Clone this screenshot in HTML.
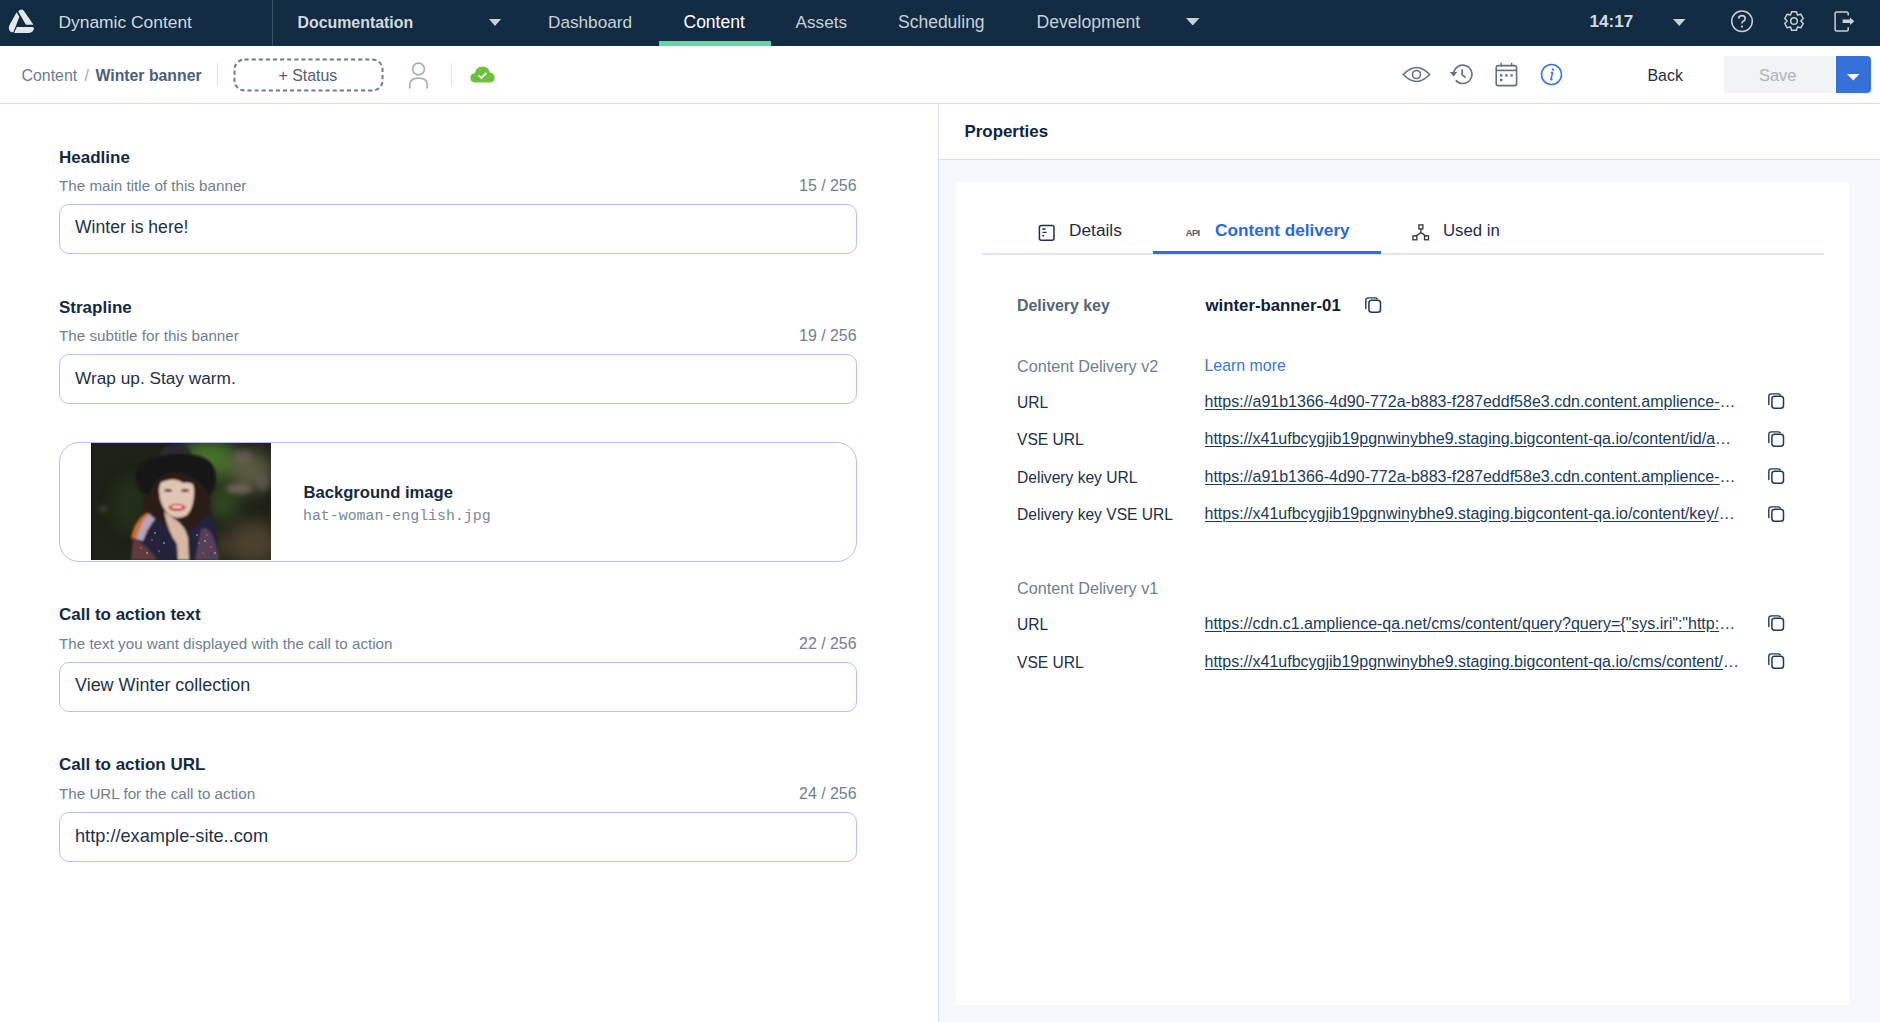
<!DOCTYPE html>
<html><head><meta charset="utf-8"><title>Dynamic Content</title>
<style>
html,body{margin:0;padding:0;width:1880px;height:1022px;overflow:hidden;background:#fff;font-family:"Liberation Sans", sans-serif}
.t{position:absolute;white-space:nowrap;line-height:1}
</style></head><body>
<div style="position:absolute;left:0px;top:0px;width:1880px;height:46px;background:#102b42"></div>
<div style="position:absolute;left:271.5px;top:0px;width:1px;height:46px;background:#3d5163"></div>
<svg style="position:absolute;left:0;top:0" width="40" height="40" viewBox="0 0 40 40">
<g fill="#e4e8ec">
<path d="M18.3 11.6 Q19.4 9.5 21.6 9.6 Q23.2 9.7 24.3 11.4 L33.5 24.7 L25.9 24.7 Z"/>
<path d="M16.6 12.3 L19.4 16.7 L13.6 31.8 Q11.4 33.2 9.6 30.8 Q8.0 28.0 9.4 25.2 Z"/>
<path d="M16.9 27.0 L32.2 27.0 Q34.6 27.2 33.7 29.6 Q32.4 33.0 28.4 33.0 L14.1 33.0 Z"/>
</g></svg>
<div class="t " style="left:58.5px;top:14.07px;font-size:17.4px;color:#d4d9de;font-weight:400;">Dynamic Content</div>
<div class="t " style="left:297.5px;top:14.84px;font-size:15.9px;color:#d4d9de;font-weight:700;">Documentation</div>
<svg style="position:absolute;left:489px;top:18.5px" width="12" height="7" viewBox="0 0 12 7"><path d="M0 0 L12 0 L6.0 7 Z" fill="#c9d0d6"/></svg>
<div class="t " style="left:548px;top:14.04px;font-size:17.2px;color:#c9d0d6;font-weight:400;">Dashboard</div>
<div class="t " style="left:683.5px;top:13.79px;font-size:17.5px;color:#ffffff;font-weight:400;">Content</div>
<div class="t " style="left:795.5px;top:14.04px;font-size:17.2px;color:#c9d0d6;font-weight:400;">Assets</div>
<div class="t " style="left:898px;top:13.79px;font-size:17.5px;color:#c9d0d6;font-weight:400;">Scheduling</div>
<div class="t " style="left:1036.5px;top:13.70px;font-size:17.6px;color:#c9d0d6;font-weight:400;">Development</div>
<div style="position:absolute;left:658.5px;top:41px;width:112px;height:5px;background:#62d9a4"></div>
<svg style="position:absolute;left:1186px;top:17.5px" width="13.5" height="7.5" viewBox="0 0 13.5 7.5"><path d="M0 0 L13.5 0 L6.75 7.5 Z" fill="#c9d0d6"/></svg>
<div class="t " style="left:1589.5px;top:13.42px;font-size:17.1px;color:#d4d9de;font-weight:700;">14:17</div>
<svg style="position:absolute;left:1673px;top:18.5px" width="12.5" height="7" viewBox="0 0 12.5 7"><path d="M0 0 L12.5 0 L6.25 7 Z" fill="#c9d0d6"/></svg>
<svg style="position:absolute;left:1730px;top:10px" width="24" height="23" viewBox="0 0 24 23"><circle cx="12" cy="11.3" r="10.3" fill="none" stroke="#c9d0d6" stroke-width="1.5"/>
<path d="M8.6 8.6 Q8.8 5.6 12 5.6 Q15.2 5.6 15.2 8.4 Q15.2 10.2 13.2 11.2 Q12 11.8 12 13.6" fill="none" stroke="#c9d0d6" stroke-width="1.6"/><circle cx="12" cy="16.6" r="1.1" fill="#c9d0d6"/></svg>
<svg style="position:absolute;left:1783.1px;top:10.4px" width="22" height="22" viewBox="0 0 22 22"><path d="M8.53 1.72 L13.47 1.72 L14.36 4.86 L14.64 5.02 L17.80 4.22 L20.27 8.50 L18.00 10.83 L18.00 11.17 L20.27 13.50 L17.80 17.78 L14.64 16.98 L14.36 17.14 L13.47 20.28 L8.53 20.28 L7.64 17.14 L7.36 16.98 L4.20 17.78 L1.73 13.50 L4.00 11.17 L4.00 10.83 L1.73 8.50 L4.20 4.22 L7.36 5.02 L7.64 4.86 Z" fill="none" stroke="#c9d0d6" stroke-width="1.5" stroke-linejoin="round"/><circle cx="11" cy="11" r="3.3" fill="none" stroke="#c9d0d6" stroke-width="1.5"/></svg>
<svg style="position:absolute;left:1834px;top:11px" width="22" height="21" viewBox="0 0 22 21"><path d="M14.2 4.6 L14.2 2.6 Q14.2 1.1 12.7 1.1 L2.6 1.1 Q1.1 1.1 1.1 2.6 L1.1 18.4 Q1.1 19.9 2.6 19.9 L12.7 19.9 Q14.2 19.9 14.2 18.4 L14.2 16.2" fill="none" stroke="#c9d0d6" stroke-width="1.5"/>
<path d="M8.6 8.6 L16 8.6 L16 6.4 L20.4 10.3 L16 14.1 L16 12.1 L8.6 12.1 Z" fill="#c9d0d6"/></svg>
<div style="position:absolute;left:0px;top:103px;width:1880px;height:1.2px;background:#d8def8"></div>
<div class="t " style="left:21.5px;top:68.14px;font-size:15.9px;color:#6a7e8c;font-weight:400;">Content</div>
<div class="t " style="left:84.5px;top:68.14px;font-size:15.9px;color:#9aa8b2;font-weight:400;">/</div>
<div class="t " style="left:95.5px;top:67.53px;font-size:15.8px;color:#4b6072;font-weight:700;">Winter banner</div>
<div style="position:absolute;left:217px;top:62.5px;width:1.2px;height:24px;background:#dfe3f8"></div>
<svg style="position:absolute;left:233px;top:57.5px" width="151" height="34" viewBox="0 0 151 34"><rect x="1.5" y="1.5" width="148" height="31" rx="10" fill="none" stroke="#6d7b86" stroke-width="2" stroke-dasharray="4.2 2.9"/></svg>
<div class="t " style="left:278.5px;top:68.14px;font-size:15.9px;color:#50606d;font-weight:400;">+ Status</div>
<svg style="position:absolute;left:407px;top:62px" width="23" height="28" viewBox="0 0 23 28"><circle cx="11.5" cy="7" r="5.9" fill="none" stroke="#a5afb5" stroke-width="1.6"/><path d="M2.8 26.6 L2.8 22.6 Q2.8 16.2 11.5 16.2 Q20.2 16.2 20.2 22.6 L20.2 26.6" fill="none" stroke="#a5afb5" stroke-width="1.7"/></svg>
<div style="position:absolute;left:451px;top:62.5px;width:1.2px;height:24px;background:#dfe3f8"></div>
<svg style="position:absolute;left:470px;top:66px" width="25" height="17" viewBox="0 0 25 17"><path d="M5.6 16.6 Q0.4 16.6 0.4 11.8 Q0.4 7.6 4.8 7.2 Q6 0.4 12.6 0.4 Q18.6 0.4 19.8 6.4 Q24.6 7.0 24.6 11.6 Q24.6 16.6 19.4 16.6 Z" fill="#6cc13c"/><path d="M8.6 9.4 L11.4 12.0 L16.4 6.8" fill="none" stroke="#fff" stroke-width="1.8"/></svg>
<svg style="position:absolute;left:1402px;top:65px" width="29" height="19" viewBox="0 0 29 19"><path d="M1.4 9.5 Q14.5 -4.5 27.6 9.5 Q14.5 23.5 1.4 9.5 Z" fill="none" stroke="#5e7280" stroke-width="1.6"/><circle cx="14.5" cy="9.5" r="4" fill="none" stroke="#5e7280" stroke-width="1.6"/></svg>
<svg style="position:absolute;left:1449px;top:64px" width="25" height="21" viewBox="0 0 25 21"><path d="M4.6 9.2 A9.2 9.2 0 1 1 6.8 16.4" fill="none" stroke="#5e7280" stroke-width="1.6"/><path d="M0.8 8.0 L8.2 8.0 L4.6 12.6 Z" fill="#5e7280"/><path d="M13.2 5.2 L13.2 10.8 L16.8 13.6" fill="none" stroke="#5e7280" stroke-width="1.7"/></svg>
<svg style="position:absolute;left:1495px;top:62px" width="24" height="25" viewBox="0 0 24 25"><rect x="1.2" y="3.6" width="20.4" height="20" rx="2.2" fill="none" stroke="#5e7280" stroke-width="1.6"/><path d="M1.2 8.4 L21.6 8.4" stroke="#5e7280" stroke-width="1.6"/><path d="M6.2 0.8 L6.2 4.6 M16.6 0.8 L16.6 4.6" stroke="#5e7280" stroke-width="1.4"/><rect x="5" y="12.2" width="2.4" height="2.4" fill="#5e7280"/><rect x="10.2" y="12.2" width="2.4" height="2.4" fill="#5e7280"/><rect x="15.4" y="12.2" width="2.4" height="2.4" fill="#5e7280"/><rect x="5" y="16.8" width="2.4" height="2.4" fill="#5e7280"/></svg>
<svg style="position:absolute;left:1540px;top:63px" width="23" height="23" viewBox="0 0 23 23"><circle cx="11.5" cy="11.5" r="10" fill="none" stroke="#3a78e0" stroke-width="1.6"/><circle cx="12.9" cy="6.6" r="1.2" fill="#3a78e0"/><path d="M10.6 9.6 L12.6 9.6 L10.9 16.2 Q10.7 17 11.6 16.8 L12.6 16.4" fill="none" stroke="#3a78e0" stroke-width="1.5" stroke-linejoin="round"/></svg>
<div class="t " style="left:1647.5px;top:67.84px;font-size:15.9px;color:#1c2f3f;font-weight:400;">Back</div>
<div style="position:absolute;left:1723.5px;top:56px;width:112px;height:36.5px;background:#f1f3f4;border-radius:3px 0 0 3px"></div>
<div class="t " style="left:1759px;top:66.72px;font-size:16.4px;color:#aab6bf;font-weight:400;">Save</div>
<div style="position:absolute;left:1835.5px;top:56px;width:35.5px;height:36.5px;background:#3471d9;border-radius:0 4px 4px 0"></div>
<svg style="position:absolute;left:1846.5px;top:74px" width="12.5" height="6.5" viewBox="0 0 12.5 6.5"><path d="M0 0 L12.5 0 L6.25 6.5 Z" fill="#ffffff"/></svg>
<div class="t " style="left:59px;top:148.51px;font-size:17.0px;color:#142a3e;font-weight:700;">Headline</div>
<div class="t " style="left:59px;top:177.63px;font-size:15.2px;color:#6f808c;font-weight:400;">The main title of this banner</div>
<div class="t" style="right:1023.5px;top:178.04px;font-size:15.9px;color:#6f808c;font-weight:400;">15 / 256</div>
<div style="position:absolute;left:59px;top:204.2px;width:797.5px;height:49.5px;border:1.6px solid #b4bff4;border-radius:10px;box-sizing:border-box;background:#fff"></div>
<div class="t " style="left:75px;top:219.30px;font-size:17.6px;color:#1d3246;font-weight:400;">Winter is here!</div>
<div class="t " style="left:59px;top:298.51px;font-size:17.0px;color:#142a3e;font-weight:700;">Strapline</div>
<div class="t " style="left:59px;top:327.63px;font-size:15.2px;color:#6f808c;font-weight:400;">The subtitle for this banner</div>
<div class="t" style="right:1023.5px;top:328.04px;font-size:15.9px;color:#6f808c;font-weight:400;">19 / 256</div>
<div style="position:absolute;left:59px;top:354.2px;width:797.5px;height:49.5px;border:1.6px solid #b4bff4;border-radius:10px;box-sizing:border-box;background:#fff"></div>
<div class="t " style="left:75px;top:369.60px;font-size:17.25px;color:#1d3246;font-weight:400;">Wrap up. Stay warm.</div>
<div class="t " style="left:59px;top:606.41px;font-size:17.0px;color:#142a3e;font-weight:700;">Call to action text</div>
<div class="t " style="left:59px;top:635.53px;font-size:15.2px;color:#6f808c;font-weight:400;">The text you want displayed with the call to action</div>
<div class="t" style="right:1023.5px;top:635.94px;font-size:15.9px;color:#6f808c;font-weight:400;">22 / 256</div>
<div style="position:absolute;left:59px;top:662.0999999999999px;width:797.5px;height:49.5px;border:1.6px solid #b4bff4;border-radius:10px;box-sizing:border-box;background:#fff"></div>
<div class="t " style="left:75px;top:676.91px;font-size:17.95px;color:#1d3246;font-weight:400;">View Winter collection</div>
<div class="t " style="left:59px;top:756.41px;font-size:17.0px;color:#142a3e;font-weight:700;">Call to action URL</div>
<div class="t " style="left:59px;top:785.53px;font-size:15.2px;color:#6f808c;font-weight:400;">The URL for the call to action</div>
<div class="t" style="right:1023.5px;top:785.94px;font-size:15.9px;color:#6f808c;font-weight:400;">24 / 256</div>
<div style="position:absolute;left:59px;top:812.0999999999999px;width:797.5px;height:49.5px;border:1.6px solid #b4bff4;border-radius:10px;box-sizing:border-box;background:#fff"></div>
<div class="t " style="left:75px;top:826.69px;font-size:18.2px;color:#1d3246;font-weight:400;">http://example-site..com</div>
<div style="position:absolute;left:59px;top:441.5px;width:797.5px;height:120px;border:1.5px solid #b4bff4;border-radius:20px;box-sizing:border-box"></div>
<svg style="position:absolute;left:91px;top:443px" width="180" height="117" viewBox="0 0 180 117">
<defs>
<filter id="bl" x="-30%" y="-30%" width="160%" height="160%"><feGaussianBlur stdDeviation="8"/></filter>
<filter id="bl2" x="-30%" y="-30%" width="160%" height="160%"><feGaussianBlur stdDeviation="2.5"/></filter>
<filter id="bl1" x="-20%" y="-20%" width="140%" height="140%"><feGaussianBlur stdDeviation="1.0"/></filter>
<clipPath id="cp"><rect width="180" height="117"/></clipPath>
</defs>
<g clip-path="url(#cp)">
<rect width="180" height="117" fill="#1e2116"/>
<g filter="url(#bl)">
<ellipse cx="40" cy="62" rx="18" ry="28" fill="#222d19"/>
<ellipse cx="118" cy="16" rx="28" ry="20" fill="#44702c"/>
<ellipse cx="132" cy="60" rx="16" ry="16" fill="#2d4a21"/>
<ellipse cx="160" cy="28" rx="22" ry="20" fill="#595a40"/>
<ellipse cx="162" cy="100" rx="26" ry="22" fill="#4c412e"/>
<ellipse cx="125" cy="105" rx="12" ry="14" fill="#3a3622"/>
</g>
<g filter="url(#bl2)">
<ellipse cx="148" cy="46" rx="13" ry="5" fill="#7a6e62" opacity="0.75"/>
<ellipse cx="152" cy="14" rx="9" ry="7" fill="#7a6068" opacity="0.55"/>
<ellipse cx="172" cy="40" rx="6" ry="8" fill="#70606a" opacity="0.5"/>
<ellipse cx="12" cy="66" rx="2.5" ry="2.5" fill="#7a7050" opacity="0.7"/>
</g>
<g filter="url(#bl1)">
<!-- hair back -->
<path d="M58 36 Q85 20 114 34 Q122 58 120 92 Q104 108 88 100 Q70 108 54 94 Q50 60 58 36 Z" fill="#2a1d19"/>
<!-- scarf -->
<path d="M40 117 L42 92 Q46 74 60 70 L70 78 L100 88 L118 70 Q126 78 128 117 Z" fill="#23213a"/>
<path d="M40 95 Q44 76 56 70 L60 72 Q50 80 46 96 Z" fill="#d2692a"/>
<path d="M45 96 Q50 78 58 71 L64 76 Q56 86 52 98 Z" fill="#b3a4b5"/>
<path d="M40 117 L42 96 Q55 100 66 117 Z" fill="#5e3a3e"/>
<path d="M104 117 L110 86 Q122 80 128 117 Z" fill="#54405a"/>
<!-- face -->
<path d="M68 48 Q68 33 85 33 Q103 33 103 48 Q103 65 96 72 Q88 77 80 73 Q69 65 68 48 Z" fill="#e2c6b4"/>
<!-- hand -->
<path d="M73 68 Q79 73 85 77 Q94 83 97 95 L98 117 L87 117 L86 101 Q77 89 73 68 Z" fill="#d8b8a4"/>
<!-- bangs / side hair -->
<path d="M62 46 Q66 24 88 25 Q108 27 108 46 Q100 38 92 40 Q84 34 74 38 Q66 40 62 46 Z" fill="#2a1d19"/>
<path d="M103 44 Q110 50 110 70 Q104 82 98 84 Q104 70 103 44 Z" fill="#2a1d19"/>
<path d="M68 44 Q62 56 66 76 Q70 82 74 82 Q68 66 68 44 Z" fill="#2a1d19"/>
<!-- lips -->
<ellipse cx="86" cy="64.5" rx="8.5" ry="3.4" fill="#c52a2e"/>
<ellipse cx="86" cy="64" rx="5.6" ry="1.3" fill="#f0e4de"/>
<!-- eyes -->
<ellipse cx="77" cy="47.5" rx="4" ry="1.5" fill="#4a3430"/>
<ellipse cx="94" cy="47.5" rx="4" ry="1.5" fill="#4a3430"/>
<!-- hat -->
<path d="M45 38 Q40 16 84 11 Q124 9 125 33 Q126 46 118 53 Q112 36 90 30 Q66 26 58 52 Q48 50 45 38 Z" fill="#181413"/>
<path d="M68 13 Q72 2 84 1.5 Q98 1.5 101 12 Q86 9 68 13 Z" fill="#2c2b30"/>
</g>
<!-- dots -->
<g fill="#c84a4a">
<circle cx="56" cy="88" r="0.9"/><circle cx="61" cy="97" r="0.9"/><circle cx="50" cy="105" r="0.9"/><circle cx="68" cy="108" r="0.9"/><circle cx="108" cy="100" r="0.9"/><circle cx="116" cy="92" r="0.9"/><circle cx="112" cy="110" r="0.9"/><circle cx="120" cy="104" r="0.9"/>
</g>
<g fill="#d8d0b0">
<circle cx="64" cy="90" r="0.8"/><circle cx="73" cy="100" r="0.8"/><circle cx="56" cy="110" r="0.8"/><circle cx="106" cy="92" r="0.8"/><circle cx="114" cy="98" r="0.8"/><circle cx="124" cy="110" r="0.8"/>
</g>
<rect x="0" y="0" width="1.2" height="117" fill="#111"/>
</g>
</svg>

<div class="t " style="left:303.5px;top:484.65px;font-size:16.6px;color:#142a3e;font-weight:700;">Background image</div>
<div class="t " style="left:303px;top:509.49px;font-size:14.9px;color:#7a8994;font-weight:400;font-family:'Liberation Mono',monospace">hat-woman-english.jpg</div>
<div style="position:absolute;left:938px;top:103.5px;width:942px;height:918.5px;background:#f7f8fd"></div>
<div style="position:absolute;left:938px;top:103.5px;width:1.2px;height:918.5px;background:#d8def8"></div>
<div style="position:absolute;left:939.2px;top:104.2px;width:940.8px;height:55px;background:#fff"></div>
<div style="position:absolute;left:939.2px;top:159px;width:940.8px;height:1.2px;background:#d8def8"></div>
<div class="t " style="left:964.5px;top:124.29px;font-size:16.9px;color:#0f2538;font-weight:700;">Properties</div>
<div style="position:absolute;left:956px;top:181.5px;width:893px;height:823px;background:#fff"></div>
<div style="position:absolute;left:982px;top:253px;width:842px;height:2px;background:#e0e4f8"></div>
<div style="position:absolute;left:1153px;top:250.5px;width:228px;height:3px;background:#2b6fdb"></div>
<svg style="position:absolute;left:1038px;top:224px" width="18" height="18" viewBox="0 0 18 18"><rect x="1.4" y="1.6" width="14.6" height="14.6" rx="2" fill="none" stroke="#1b3044" stroke-width="1.5"/><path d="M4.4 5 L7.6 5 M4.4 8.4 L8.6 8.4 M4.4 11.8 L6.2 11.8" stroke="#1b3044" stroke-width="1.4"/></svg>
<div class="t " style="left:1069px;top:222.16px;font-size:17.3px;color:#1b3044;font-weight:400;">Details</div>
<div class="t " style="left:1185.8px;top:228.34px;font-size:9.4px;color:#4f5d68;font-weight:700;letter-spacing:-0.6px">API</div>
<div class="t " style="left:1215px;top:222.24px;font-size:17.2px;color:#2a6ad6;font-weight:700;">Content delivery</div>
<svg style="position:absolute;left:1412px;top:224px" width="18" height="18" viewBox="0 0 18 18"><rect x="6.9" y="0.9" width="4" height="4" fill="none" stroke="#333" stroke-width="1.3"/><rect x="0.9" y="11.8" width="4" height="4" fill="none" stroke="#333" stroke-width="1.3"/><rect x="12.5" y="11.8" width="4" height="4" fill="none" stroke="#333" stroke-width="1.3"/><path d="M8.9 4.9 L8.9 8.6 L3.6 12.2 M8.9 8.6 L14.2 12.2" fill="none" stroke="#333" stroke-width="1.3"/></svg>
<div class="t " style="left:1443px;top:222.58px;font-size:16.8px;color:#1b3044;font-weight:400;">Used in</div>
<div class="t " style="left:1017px;top:297.74px;font-size:15.9px;color:#526674;font-weight:700;">Delivery key</div>
<div class="t " style="left:1205.5px;top:297.78px;font-size:16.8px;color:#0e2234;font-weight:700;">winter-banner-01</div>
<svg style="position:absolute;left:1363.5px;top:295.5px" width="19" height="18" viewBox="0 0 19 18"><path d="M1.8 12.6 L1.8 4.4 Q1.8 1.9 4.3 1.9 L11.4 1.9 Q12.6 1.9 13.2 2.8" fill="none" stroke="#1d3a55" stroke-width="1.4" stroke-linecap="round"/><rect x="4.9" y="4.2" width="11.6" height="12" rx="2.8" fill="none" stroke="#1d3a55" stroke-width="1.5"/></svg>
<div class="t " style="left:1017px;top:358.49px;font-size:16.2px;color:#6d7f8c;font-weight:400;">Content Delivery v2</div>
<div class="t " style="left:1204.5px;top:358.34px;font-size:15.9px;color:#3874dc;font-weight:400;">Learn more</div>
<div class="t " style="left:1017px;top:394.79px;font-size:15.6px;color:#1b3044;font-weight:400;">URL</div>
<div class="t " style="left:1204.5px;top:393.76px;font-size:16px;color:#1b3a55;font-weight:400;width:535px;overflow:hidden;text-overflow:ellipsis;text-decoration:underline;text-underline-offset:2px">https://a91b1366-4d90-772a-b883-f287eddf58e3.cdn.content.amplience-qa.net/i/</div>
<svg style="position:absolute;left:1767px;top:391.90000000000003px" width="19" height="18" viewBox="0 0 19 18"><path d="M1.8 12.6 L1.8 4.4 Q1.8 1.9 4.3 1.9 L11.4 1.9 Q12.6 1.9 13.2 2.8" fill="none" stroke="#1d3a55" stroke-width="1.4" stroke-linecap="round"/><rect x="4.9" y="4.2" width="11.6" height="12" rx="2.8" fill="none" stroke="#1d3a55" stroke-width="1.5"/></svg>
<div class="t " style="left:1017px;top:432.49px;font-size:15.6px;color:#1b3044;font-weight:400;">VSE URL</div>
<div class="t " style="left:1204.5px;top:431.46px;font-size:16px;color:#1b3a55;font-weight:400;width:535px;overflow:hidden;text-overflow:ellipsis;text-decoration:underline;text-underline-offset:2px">https://x41ufbcygjib19pgnwinybhe9.staging.bigcontent-qa.io/content/id/a91b1366-4d90-772a</div>
<svg style="position:absolute;left:1767px;top:429.6px" width="19" height="18" viewBox="0 0 19 18"><path d="M1.8 12.6 L1.8 4.4 Q1.8 1.9 4.3 1.9 L11.4 1.9 Q12.6 1.9 13.2 2.8" fill="none" stroke="#1d3a55" stroke-width="1.4" stroke-linecap="round"/><rect x="4.9" y="4.2" width="11.6" height="12" rx="2.8" fill="none" stroke="#1d3a55" stroke-width="1.5"/></svg>
<div class="t " style="left:1017px;top:469.99px;font-size:15.6px;color:#1b3044;font-weight:400;">Delivery key URL</div>
<div class="t " style="left:1204.5px;top:468.96px;font-size:16px;color:#1b3a55;font-weight:400;width:535px;overflow:hidden;text-overflow:ellipsis;text-decoration:underline;text-underline-offset:2px">https://a91b1366-4d90-772a-b883-f287eddf58e3.cdn.content.amplience-qa.net/k/</div>
<svg style="position:absolute;left:1767px;top:467.1px" width="19" height="18" viewBox="0 0 19 18"><path d="M1.8 12.6 L1.8 4.4 Q1.8 1.9 4.3 1.9 L11.4 1.9 Q12.6 1.9 13.2 2.8" fill="none" stroke="#1d3a55" stroke-width="1.4" stroke-linecap="round"/><rect x="4.9" y="4.2" width="11.6" height="12" rx="2.8" fill="none" stroke="#1d3a55" stroke-width="1.5"/></svg>
<div class="t " style="left:1017px;top:507.39px;font-size:15.6px;color:#1b3044;font-weight:400;">Delivery key VSE URL</div>
<div class="t " style="left:1204.5px;top:506.36px;font-size:16px;color:#1b3a55;font-weight:400;width:535px;overflow:hidden;text-overflow:ellipsis;text-decoration:underline;text-underline-offset:2px">https://x41ufbcygjib19pgnwinybhe9.staging.bigcontent-qa.io/content/key/winter</div>
<svg style="position:absolute;left:1767px;top:504.5px" width="19" height="18" viewBox="0 0 19 18"><path d="M1.8 12.6 L1.8 4.4 Q1.8 1.9 4.3 1.9 L11.4 1.9 Q12.6 1.9 13.2 2.8" fill="none" stroke="#1d3a55" stroke-width="1.4" stroke-linecap="round"/><rect x="4.9" y="4.2" width="11.6" height="12" rx="2.8" fill="none" stroke="#1d3a55" stroke-width="1.5"/></svg>
<div class="t " style="left:1017px;top:617.19px;font-size:15.6px;color:#1b3044;font-weight:400;">URL</div>
<div class="t " style="left:1204.5px;top:616.16px;font-size:16px;color:#1b3a55;font-weight:400;width:535px;overflow:hidden;text-overflow:ellipsis;text-decoration:underline;text-underline-offset:2px">https://cdn.c1.amplience-qa.net/cms/content/query?query={"sys.iri":"http://content.cms.amplience.com/a91b</div>
<svg style="position:absolute;left:1767px;top:614.3000000000001px" width="19" height="18" viewBox="0 0 19 18"><path d="M1.8 12.6 L1.8 4.4 Q1.8 1.9 4.3 1.9 L11.4 1.9 Q12.6 1.9 13.2 2.8" fill="none" stroke="#1d3a55" stroke-width="1.4" stroke-linecap="round"/><rect x="4.9" y="4.2" width="11.6" height="12" rx="2.8" fill="none" stroke="#1d3a55" stroke-width="1.5"/></svg>
<div class="t " style="left:1017px;top:654.89px;font-size:15.6px;color:#1b3044;font-weight:400;">VSE URL</div>
<div class="t " style="left:1204.5px;top:653.86px;font-size:16px;color:#1b3a55;font-weight:400;width:535px;overflow:hidden;text-overflow:ellipsis;text-decoration:underline;text-underline-offset:2px">https://x41ufbcygjib19pgnwinybhe9.staging.bigcontent-qa.io/cms/content/query</div>
<svg style="position:absolute;left:1767px;top:652.0px" width="19" height="18" viewBox="0 0 19 18"><path d="M1.8 12.6 L1.8 4.4 Q1.8 1.9 4.3 1.9 L11.4 1.9 Q12.6 1.9 13.2 2.8" fill="none" stroke="#1d3a55" stroke-width="1.4" stroke-linecap="round"/><rect x="4.9" y="4.2" width="11.6" height="12" rx="2.8" fill="none" stroke="#1d3a55" stroke-width="1.5"/></svg>
<div class="t " style="left:1017px;top:579.79px;font-size:16.2px;color:#6d7f8c;font-weight:400;">Content Delivery v1</div>
</body></html>
